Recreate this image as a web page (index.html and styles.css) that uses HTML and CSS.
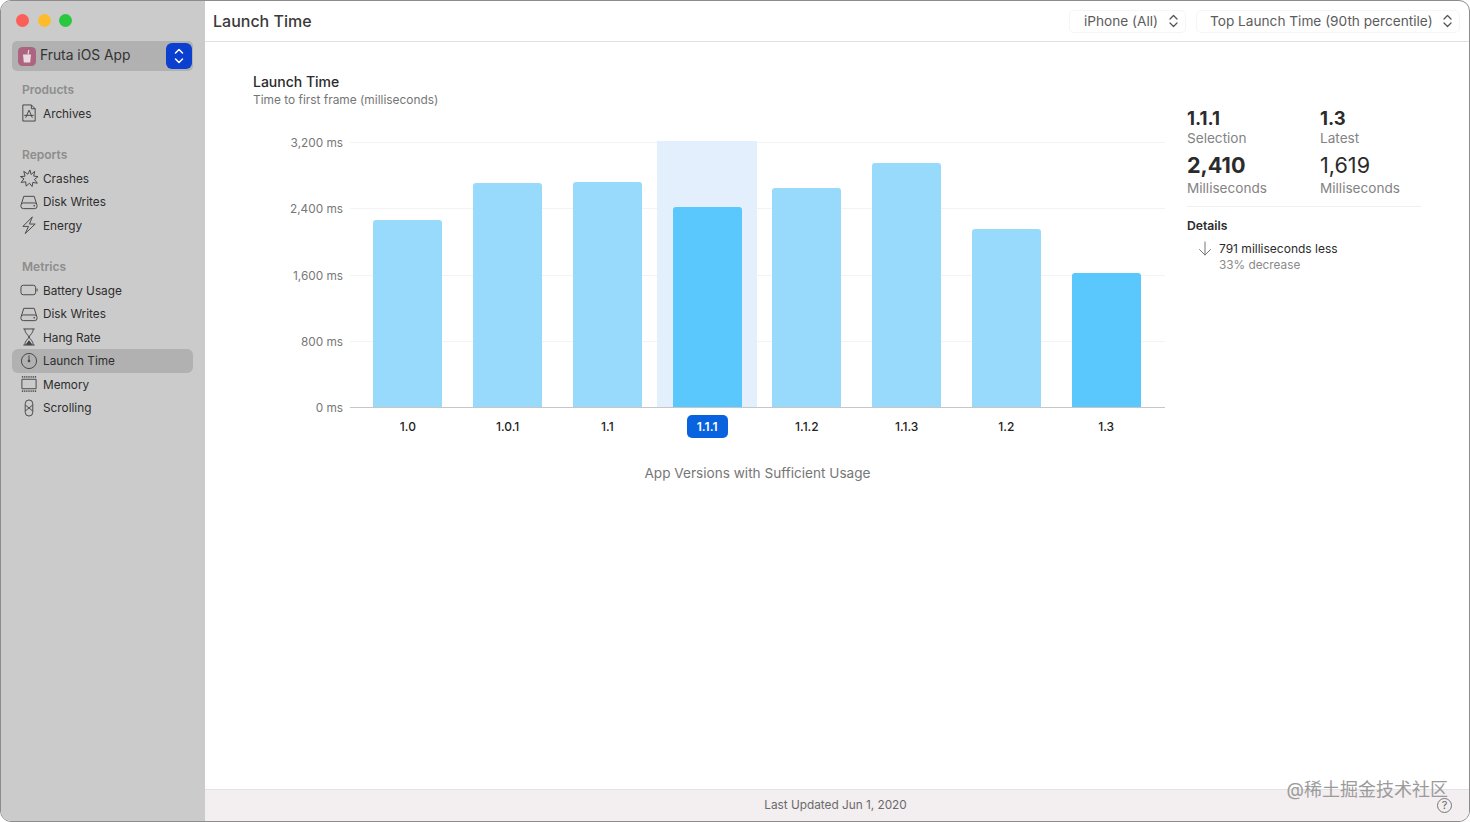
FILE: index.html
```html
<!DOCTYPE html>
<html lang="en">
<head>
  <meta charset="UTF-8">
  <title>Launch Time</title>
  <link rel="stylesheet" href="styles.css">
</head>
<body>

<div class="window">
  <aside class="sidebar">
    <div class="traffic">
      <span class="dot red"></span>
      <span class="dot yellow"></span>
      <span class="dot green"></span>
    </div>

    <div class="app-picker">
      <span class="app-icon">
        <svg width="18" height="19" viewBox="0 0 18 19"><rect width="18" height="19" rx="4.500" fill="#ad6480"/><path d="M5 7.500h8l-.8 8H5.800z" fill="#eadbe0"/><path d="M10 7.500l.8-4.500" stroke="#eadbe0" stroke-width="1.200" fill="none"/></svg>
      </span>
      <span class="app-name">Fruta iOS App</span>
      <span class="app-stepper">
        <svg width="10" height="18" viewBox="0 0 10 18" fill="none" stroke="#fff" stroke-width="1.500" stroke-linecap="round" stroke-linejoin="round"><path d="M1.500 6L5 2.500 8.500 6M1.500 12L5 15.500 8.500 12"/></svg>
      </span>
    </div>

    <h4 class="nav-head first">Products</h4>
    <div class="nav-item">
      <svg class="nav-icon" viewBox="0 0 19 19"><path d="M3 1h9l4 4v13H3z"/><path d="M12 1v4h4M6 14.500L9.500 6.500l3.500 8M4.500 12h10"/></svg>
      <span>Archives</span>
    </div>

    <h4 class="nav-head">Reports</h4>
    <div class="nav-item">
      <svg class="nav-icon" viewBox="0 0 19 19"><path d="M10.500 1l1.200 4.800L15.500 2.500l-1 5 4.500.5-3.700 3 3 4-4.800-.8-.7 4.300-2.800-3.500-3.500 3-.5-4.500-4.800.7 3-3.800L.500 8l4.800-.4L4 2.500l4.300 3z"/></svg>
      <span>Crashes</span>
    </div>
    <div class="nav-item">
      <svg class="nav-icon" viewBox="0 0 19 19"><path d="M1.500 11.500L4 3.500h11l2.500 8"/><rect x="1" y="10.500" width="17" height="6" rx="2.500"/><circle cx="15" cy="13.500" r=".5"/></svg>
      <span>Disk Writes</span>
    </div>
    <div class="nav-item">
      <svg class="nav-icon" viewBox="0 0 19 19"><path d="M13 1L3 11h6l-3.500 7.500L16 8.500h-6z"/></svg>
      <span>Energy</span>
    </div>

    <h4 class="nav-head">Metrics</h4>
    <div class="nav-item">
      <svg class="nav-icon" viewBox="0 0 19 19"><rect x="1" y="4.500" width="15.500" height="10" rx="2.500"/><path d="M18 8v3"/></svg>
      <span>Battery Usage</span>
    </div>
    <div class="nav-item">
      <svg class="nav-icon" viewBox="0 0 19 19"><path d="M1.500 11.500L4 3.500h11l2.500 8"/><rect x="1" y="10.500" width="17" height="6" rx="2.500"/><circle cx="15" cy="13.500" r=".5"/></svg>
      <span>Disk Writes</span>
    </div>
    <div class="nav-item">
      <svg class="nav-icon" viewBox="0 0 19 19"><path d="M3.500 1h12M3.500 18h12M5 1c0 4.500 3.500 6 4.500 8.500C10.500 7 14 5.500 14 1M5 18c0-4.500 3.500-6 4.500-8.500C10.500 12 14 13.500 14 18"/><path d="M6.500 17.500l3-4 3 4z" fill="#444"/></svg>
      <span>Hang Rate</span>
    </div>
    <div class="nav-item selected">
      <svg class="nav-icon" viewBox="0 0 19 19"><circle cx="9.500" cy="9.500" r="8"/><path d="M9.500 3.500v6"/><circle cx="9.500" cy="9.500" r="1" fill="#444"/></svg>
      <span>Launch Time</span>
    </div>
    <div class="nav-item">
      <svg class="nav-icon" viewBox="0 0 19 19"><rect x="2" y="4.500" width="15" height="10"/><path stroke-dasharray="1 1" stroke-width="2" d="M2 2h15M2 17h15"/></svg>
      <span>Memory</span>
    </div>
    <div class="nav-item">
      <svg class="nav-icon" viewBox="0 0 19 19"><rect x="5.500" y="1" width="8" height="17" rx="4"/><path d="M5.800 6.500l7.400 6M13.200 6.500l-7.400 6"/></svg>
      <span>Scrolling</span>
    </div>
  </aside>

  <div class="main">
    <header class="titlebar">
      <h1>Launch Time</h1>
      <div class="select device">
        <span>iPhone (All)</span>
        <svg width="9" height="14" viewBox="0 0 9 14" fill="none" stroke="#555" stroke-width="1.300" stroke-linecap="round" stroke-linejoin="round"><path d="M1 5l3.500-3.500L8 5M1 9l3.500 3.500L8 9"/></svg>
      </div>
      <div class="select metric">
        <span>Top Launch Time (90th percentile)</span>
        <svg width="9" height="14" viewBox="0 0 9 14" fill="none" stroke="#555" stroke-width="1.300" stroke-linecap="round" stroke-linejoin="round"><path d="M1 5l3.500-3.500L8 5M1 9l3.500 3.500L8 9"/></svg>
      </div>
    </header>

    <div class="content">
      <section class="chart-panel">
        <h2>Launch Time</h2>
        <p class="subtitle">Time to first frame (milliseconds)</p>

        <div class="chart">
          <div class="y-axis">
            <span>3,200 ms</span>
            <span>2,400 ms</span>
            <span>1,600 ms</span>
            <span>800 ms</span>
            <span>0 ms</span>
          </div>
          <div class="plot-col">
            <div class="plot">
              <div class="gridlines"><i></i><i></i><i></i><i></i></div>
              <div class="slot"><div class="bar" style="height:187px"></div></div>
              <div class="slot"><div class="bar" style="height:224px"></div></div>
              <div class="slot"><div class="bar" style="height:225px"></div></div>
              <div class="slot active"><div class="bar" style="height:200px"></div></div>
              <div class="slot"><div class="bar" style="height:219px"></div></div>
              <div class="slot"><div class="bar" style="height:244px"></div></div>
              <div class="slot"><div class="bar" style="height:178px"></div></div>
              <div class="slot latest"><div class="bar" style="height:134px"></div></div>
            </div>
            <div class="x-labels">
              <span>1.0</span>
              <span>1.0.1</span>
              <span>1.1</span>
              <span><b class="pill">1.1.1</b></span>
              <span>1.1.2</span>
              <span>1.1.3</span>
              <span>1.2</span>
              <span>1.3</span>
            </div>
            <p class="x-title">App Versions with Sufficient Usage</p>
          </div>
        </div>
      </section>

      <section class="stats">
        <div class="stat-grid">
          <div>
            <div class="version">1.1.1</div>
            <div class="caption">Selection</div>
          </div>
          <div>
            <div class="version">1.3</div>
            <div class="caption">Latest</div>
          </div>
          <div>
            <div class="value strong">2,410</div>
            <div class="caption">Milliseconds</div>
          </div>
          <div>
            <div class="value">1,619</div>
            <div class="caption">Milliseconds</div>
          </div>
        </div>
        <h3>Details</h3>
        <div class="detail">
          <svg width="14" height="15" viewBox="0 0 14 15" fill="none" stroke="#777" stroke-width="1" stroke-linecap="round" stroke-linejoin="round"><path d="M7 1v13M1.500 8.500L7 14l5.500-5.500"/></svg>
          <div>
            <div class="detail-main">791 milliseconds less</div>
            <div class="detail-sub">33% decrease</div>
          </div>
        </div>
      </section>
    </div>

    <footer class="footer">
      <span class="updated">Last Updated Jun 1, 2020</span>
      <span class="watermark">@稀土掘金技术社区</span>
      <span class="help">?</span>
    </footer>
  </div>
</div>

</body>
</html>
```

FILE: styles.css
```css
* {
  box-sizing: border-box;
}
html, body {
  margin: 0;
  height: 100%;
  background: #fff;
}
body {
  font-family: Inter, "Noto Sans CJK SC", sans-serif;
  color: #2b2b2b;
}
h1, h2, h3, h4, p {
  margin: 0;
}
.window {
  display: flex;
  width: 1470px;
  height: 822px;
  border: 1px solid #8c8c8c;
  border-radius: 11px;
  overflow: hidden;
  background: #fff;
}

/* sidebar */
.sidebar {
  width: 204px;
  flex: none;
  padding: 0 12px 0 11px;
  background: #cbcbcb;
}
.traffic {
  display: flex;
  gap: 8.500px;
  height: 40px;
  padding: 13px 0 0 4px;
}
.dot {
  width: 13px;
  height: 13px;
  border-radius: 50%;
}
.red { background: #fc5f57; }
.yellow { background: #fdbc2e; }
.green { background: #2ac83f; }
.app-picker {
  display: flex;
  align-items: center;
  height: 30px;
  padding: 0 1px 0 6px;
  border-radius: 5px;
  background: #b1b1b1;
}
.app-icon {
  display: flex;
}
.app-name {
  flex: 1;
  margin-left: 4px;
  padding-bottom: 2px;
  font-size: 13.800px;
  color: #333;
}
.app-stepper {
  display: flex;
  align-items: center;
  justify-content: center;
  width: 26px;
  height: 26px;
  border-radius: 6px;
  background: #0b3fd0;
}
.nav-head {
  height: 23.500px;
  margin-top: 18px;
  padding-left: 10px;
  font-size: 12px;
  line-height: 23.500px;
  font-weight: 600;
  color: #8d8d8d;
}
.nav-head.first {
  margin-top: 7px;
}
.nav-item {
  display: flex;
  align-items: center;
  gap: 5px;
  height: 23.500px;
  padding-left: 8px;
  font-size: 11.800px;
  color: #2e2e2e;
}
.nav-item span {
  padding-top: 1px;
}
.nav-item.selected {
  border-radius: 6px;
  background: #b1b1b1;
}
.nav-icon {
  width: 18px;
  height: 18px;
  flex: none;
  fill: none;
  stroke: #444;
  stroke-width: 1;
  stroke-linejoin: round;
}

/* main column */
.main {
  flex: 1;
  display: flex;
  flex-direction: column;
  min-width: 0;
}
.titlebar {
  display: flex;
  align-items: center;
  flex: none;
  height: 41px;
  padding: 0 9px 0 8px;
  border-bottom: 1px solid #e2e2e2;
}
.titlebar h1 {
  flex: 1;
  font-size: 16px;
  font-weight: 500;
  color: #3a3a3a;
}
.select {
  display: flex;
  align-items: center;
  justify-content: space-between;
  height: 23px;
  font-size: 13.650px;
  color: #5c5c5c;
  border: 1px solid #f5f5f5;
  border-radius: 5px;
}
.select span {
  padding-bottom: 1px;
}
.device {
  width: 117px;
  margin-right: 10px;
  padding: 0 7px 0 14px;
}
.metric {
  width: 264px;
  padding: 0 7px 0 13px;
}
.content {
  flex: 1;
  display: flex;
  padding: 31px 0 0 48px;
}
.chart-panel {
  width: 912px;
  flex: none;
}
.chart-panel h2 {
  font-size: 14px;
  line-height: 18px;
  font-weight: 500;
}
.subtitle {
  font-size: 11.900px;
  line-height: 18px;
  color: #767676;
}
.chart {
  display: flex;
  margin-top: 33px;
}
.y-axis {
  width: 90px;
  height: 280px;
  flex: none;
  display: flex;
  flex-direction: column;
  justify-content: space-between;
  margin: -6px 7px 0 0;
  font-size: 11.800px;
  line-height: 15px;
  text-align: right;
  color: #777;
}
.plot-col {
  flex: 1;
}
.plot {
  position: relative;
  display: flex;
  height: 266px;
  padding: 0 9px 0 8px;
  border-bottom: 1px solid #c6c6c6;
}
.gridlines {
  position: absolute;
  left: 0;
  right: 0;
  top: 0;
  height: 200px;
  display: flex;
  flex-direction: column;
  justify-content: space-between;
}
.gridlines i {
  display: block;
  height: 1px;
  background: #f3f3f3;
}
.slot {
  position: relative;
  flex: 1;
  display: flex;
  align-items: flex-end;
  justify-content: center;
}
.slot.active {
  margin-top: -1px;
  background: #e3effd;
}
.bar {
  width: 69px;
  border-radius: 3px 3px 0 0;
  background: #98dafc;
}
.active .bar,
.latest .bar {
  background: #5ac8fd;
}
.x-labels {
  display: flex;
  padding: 7px 9px 0 8px;
}
.x-labels span {
  flex: 1;
  height: 23px;
  display: flex;
  align-items: center;
  justify-content: center;
  font-size: 12px;
  font-weight: 500;
  color: #222;
}
.pill {
  width: 41px;
  height: 23px;
  border-radius: 5px;
  background: #0a63de;
  color: #fff;
  font-weight: 600;
  text-align: center;
  line-height: 23px;
}
.x-title {
  margin-top: 25px;
  text-align: center;
  font-size: 13.600px;
  line-height: 20px;
  color: #767676;
}

/* right column */
.stats {
  width: 234px;
  margin: 34px 0 0 22px;
}
.stat-grid {
  display: grid;
  grid-template-columns: 133px 1fr;
  row-gap: 5px;
  padding-bottom: 9px;
  border-bottom: 1px solid #f1f1f1;
}
.version {
  font-size: 18.500px;
  line-height: 22px;
  font-weight: 700;
}
.value {
  font-size: 21.600px;
  line-height: 27px;
  font-weight: 400;
}
.value.strong {
  font-weight: 700;
}
.caption {
  font-size: 13.600px;
  line-height: 18px;
  color: #838383;
}
.stats h3 {
  margin-top: 10px;
  font-size: 12.200px;
  line-height: 18px;
  font-weight: 600;
}
.detail {
  display: flex;
  gap: 7px;
  margin: 5px 0 0 11px;
}
.detail svg {
  margin-top: 1px;
}
.detail-main {
  font-size: 12px;
  line-height: 17px;
}
.detail-sub {
  font-size: 11.800px;
  line-height: 16px;
  color: #8a8a8a;
}

/* footer */
.footer {
  position: relative;
  flex: none;
  height: 32px;
  display: flex;
  align-items: center;
  justify-content: center;
  padding-right: 3px;
  border-top: 1px solid #e6e2e4;
  background: #f3eef0;
  font-size: 11.800px;
  color: #6a6a6a;
}
.updated {
  padding-bottom: 2px;
}
.watermark {
  position: absolute;
  right: 21px;
  top: -11px;
  font-size: 18px;
  line-height: 22px;
  color: #9b9b9b;
}
.help {
  position: absolute;
  right: 17px;
  bottom: 8px;
  width: 15px;
  height: 15px;
  border: 1px solid #777;
  border-radius: 50%;
  font-size: 11px;
  line-height: 13px;
  text-align: center;
  color: #666;
}
```
